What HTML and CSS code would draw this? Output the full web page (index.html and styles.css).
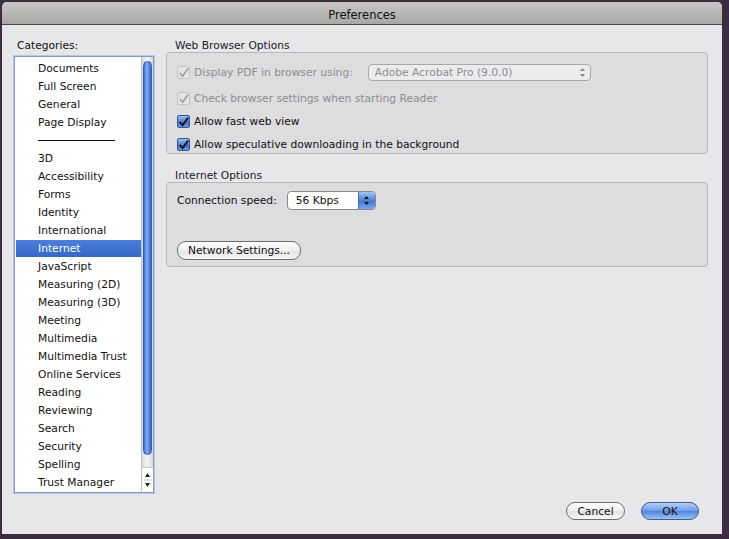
FILE: index.html
```html
<!DOCTYPE html>
<html>
<head>
<meta charset="utf-8">
<link rel="stylesheet" href="styles.css">
</head>
<body>
<div class="window">
  <div class="titlebar">Preferences</div>
  <div class="content">
    <div class="sidebar">
      <div class="label">Categories:</div>
      <div class="listbox">
        <ul class="items">
          <li>Documents</li>
          <li>Full Screen</li>
          <li>General</li>
          <li>Page Display</li>
          <li class="sep"><span></span></li>
          <li>3D</li>
          <li>Accessibility</li>
          <li>Forms</li>
          <li>Identity</li>
          <li>International</li>
          <li class="selected">Internet</li>
          <li>JavaScript</li>
          <li>Measuring (2D)</li>
          <li>Measuring (3D)</li>
          <li>Meeting</li>
          <li>Multimedia</li>
          <li>Multimedia Trust</li>
          <li>Online Services</li>
          <li>Reading</li>
          <li>Reviewing</li>
          <li>Search</li>
          <li>Security</li>
          <li>Spelling</li>
          <li>Trust Manager</li>
        </ul>
        <div class="scrollbar">
          <div class="thumb"></div>
          <div class="arrows">
            <svg width="9" height="22" viewBox="0 0 9 22"><path d="M4.5 4 L7 8 L2 8 Z" fill="#222"/><path d="M2 14 L7 14 L4.5 18 Z" fill="#222"/><line x1="0" y1="11" x2="9" y2="11" stroke="#c8c8c8"/></svg>
          </div>
        </div>
      </div>
    </div>
    <div class="main">
      <div class="group-title">Web Browser Options</div>
      <div class="group web">
        <div class="row r1">
          <span class="cb disabled"><svg width="12" height="12" viewBox="0 0 12 12"><path d="M2 6 L5 9.5 L11 1" fill="none" stroke="#a0a0a0" stroke-width="1.8"/></svg></span>
          <span class="txt dis">Display PDF in browser using:</span>
          <span class="popup dis-popup">Adobe Acrobat Pro (9.0.0)<svg class="pa" width="7" height="11" viewBox="0 0 7 11"><path d="M3.5 1 L6 4 L1 4 Z M1 7 L6 7 L3.5 10 Z" fill="#8a8a8a"/></svg></span>
        </div>
        <div class="row r2">
          <span class="cb disabled"><svg width="12" height="12" viewBox="0 0 12 12"><path d="M2 6 L5 9.5 L11 1" fill="none" stroke="#a0a0a0" stroke-width="1.8"/></svg></span>
          <span class="txt dis">Check browser settings when starting Reader</span>
        </div>
        <div class="row r3">
          <span class="cb on"><svg width="12" height="12" viewBox="0 0 12 12"><path d="M2 6 L5 9.5 L11 1" fill="none" stroke="#111" stroke-width="2"/></svg></span>
          <span class="txt">Allow fast web view</span>
        </div>
        <div class="row r4">
          <span class="cb on"><svg width="12" height="12" viewBox="0 0 12 12"><path d="M2 6 L5 9.5 L11 1" fill="none" stroke="#111" stroke-width="2"/></svg></span>
          <span class="txt">Allow speculative downloading in the background</span>
        </div>
      </div>
      <div class="group-title second">Internet Options</div>
      <div class="group inet">
        <div class="row speed">
          <span class="txt">Connection speed:</span>
          <span class="popup speed-popup"><span class="pv">56 Kbps</span><span class="pblue"><svg width="7" height="11" viewBox="0 0 7 11"><path d="M3.5 1 L6 4 L1 4 Z M1 7 L6 7 L3.5 10 Z" fill="#111"/></svg></span></span>
        </div>
        <div class="row netrow">
          <span class="btn net">Network Settings...</span>
        </div>
      </div>
    </div>
  </div>
  <div class="footer">
    <span class="btn cancel">Cancel</span>
    <span class="btn ok">OK</span>
  </div>
</div>
</body>
</html>
```
FILE: styles.css
```css
html, body {
  margin: 0;
  padding: 0;
}
body {
  background: #3b2c42;
  width: 729px;
  height: 539px;
  overflow: hidden;
  font-family: "DejaVu Sans", sans-serif;
  font-size: 10.7px;
  color: #111;
}
.window {
  margin: 2px 7px 0 2px;
  height: 532px;
  background: #e7e6e9;
  border-radius: 5px 5px 0 0;
  display: flex;
  flex-direction: column;
  overflow: hidden;
}
.titlebar {
  height: 22px;
  line-height: 26px;
  text-align: center;
  font-size: 11.5px;
  background: linear-gradient(#c8c7c5, #a9a8a6);
  border-bottom: 1px solid #4a4a4a;
  color: #111;
}
.content {
  display: flex;
  padding: 13px 0 0 12px;
  flex: 1;
}
.sidebar {
  width: 140px;
  display: flex;
  flex-direction: column;
}
.label {
  height: 13px;
  line-height: 15px;
  padding-left: 3px;
  margin-bottom: 5px;
}
.listbox {
  height: 435px;
  border: 1px solid #7f9cc8;
  box-shadow: 0 0 0 1px #b9c8e0;
  background: #fff;
  display: flex;
  position: relative;
}
.items {
  list-style: none;
  margin: 0;
  padding: 2px 0 0 1px;
  flex: 1;
}
.items li {
  height: 18px;
  line-height: 20px;
  padding-left: 22px;
  white-space: nowrap;
}
.items li.selected {
  background: linear-gradient(#4b7fdb, #3567c8);
  color: #fff;
  height: 17px;
  margin-top: 1px;
  line-height: 18px;
}
.items li.sep {
  display: flex;
  align-items: center;
}
.items li.sep span {
  width: 77px;
  height: 1px;
  background: #111;
}
.scrollbar {
  width: 11px;
  background: linear-gradient(90deg, #d8d8d8, #f4f4f4 40%, #dcdcdc);
  border-left: 1px solid #c0c0c0;
  display: flex;
  flex-direction: column;
  padding-top: 4px;
}
.thumb {
  margin: 0 1px;
  height: 392px;
  border-radius: 5px;
  background: linear-gradient(90deg, #3c6fd2, #86aff0 40%, #4d80dc 80%, #3565c8);
  border: 1px solid #2d5bb8;
}
.arrows {
  margin-top: auto;
  height: 24px;
  display: flex;
  align-items: center;
  justify-content: center;
  border-top: 1px solid #c8c8c8;
  background: #fff;
}
.main {
  margin-left: 12px;
  width: 542px;
  display: flex;
  flex-direction: column;
}
.group-title {
  height: 13px;
  line-height: 15px;
  padding-left: 9px;
  margin-bottom: 1px;
  color: #222;
}
.group-title.second {
  margin-top: 14px;
  margin-bottom: 1px;
}
.group {
  background: #dddcdf;
  border: 1px solid #b7b6ba;
  border-radius: 4px;
  padding-left: 10px;
}
.group.web {
  height: 100px;
}
.group.inet {
  height: 83px;
}
.row {
  display: flex;
  align-items: center;
  white-space: nowrap;
}
.r1 { height: 17px; margin-top: 11px; }
.r2 { height: 17px; margin-top: 9px; }
.r3 { height: 17px; margin-top: 6px; }
.r4 { height: 17px; margin-top: 6px; }
.cb {
  width: 12px;
  height: 12px;
  margin-right: 4px;
  border-radius: 2px;
  display: inline-flex;
  align-items: center;
  justify-content: center;
}
.cb.disabled {
  background: #e4e4e6;
  border: 1px solid #c4c4c6;
  width: 11px;
  height: 11px;
}
.cb.on {
  background: linear-gradient(#9fc0ef, #3d72d0 60%, #6e9ae0);
  border: 1px solid #33549a;
  width: 11px;
  height: 11px;
}
.txt.dis { color: #8d8d8f; }
.popup {
  display: inline-flex;
  align-items: center;
  height: 15px;
  border: 1px solid #a9a9ab;
  border-radius: 4px;
  background: #ececee;
  position: relative;
}
.dis-popup {
  margin-left: 15px;
  width: 215px;
  padding-left: 6px;
  color: #8d8d8f;
}
.dis-popup .pa {
  margin-left: auto;
  margin-right: 4px;
}
.speed {
  height: 19px;
  margin-top: 8px;
}
.speed-popup {
  margin-left: 10px;
  width: 87px;
  height: 17px;
  background: #fff;
  border-color: #8a8a8a;
  overflow: hidden;
}
.pv {
  flex: 1;
  padding-left: 8px;
  color: #111;
}
.pblue {
  width: 16px;
  height: 100%;
  display: flex;
  align-items: center;
  justify-content: center;
  background: linear-gradient(#a7c4f0, #4379d4 55%, #7ea5e6);
  border-left: 1px solid #4c6fb0;
}
.netrow {
  margin-top: 31px;
}
.btn {
  display: inline-flex;
  align-items: center;
  justify-content: center;
  height: 16px;
  border: 1px solid #6d6d6d;
  border-radius: 9px;
  background: linear-gradient(#ffffff, #f0f0f0 50%, #e2e2e2 51%, #f8f8f8);
  color: #111;
  padding: 0 11px;
}
.btn.net {
  height: 17px;
  width: 122px;
  padding: 0;
}
.footer {
  display: flex;
  justify-content: flex-end;
  padding: 0 23px 14px 0;
  gap: 16px;
}
.btn.cancel {
  width: 57px;
  padding: 0;
}
.btn.ok {
  width: 56px;
  padding: 0;
  background: linear-gradient(#b7d0f6, #6a9ae4 50%, #4d84dc 51%, #9cc3f3);
  border-color: #3d5d98;
}
```
